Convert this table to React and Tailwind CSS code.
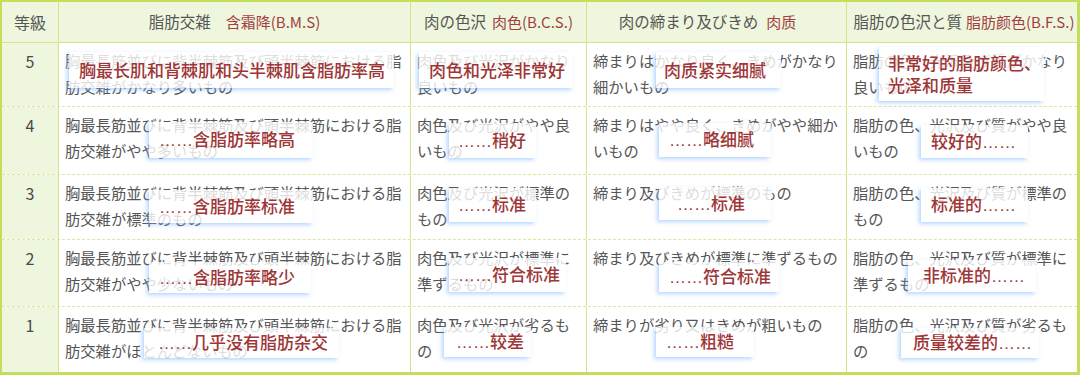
import React from 'react';

const rows = [
  {
    grade: '5',
    h: 'h-[64px]',
    cells: [
      { jp: '胸最長筋並びに背半棘筋及び頭半棘筋における脂肪交雑がかなり多いもの', tag: '胸最长肌和背棘肌和头半棘肌含脂肪率高', pos: 'left-[10px] top-[9px] w-[325px] h-[36px] pl-[10px]' },
      { jp: '肉色及び光沢がかなり良いもの', tag: '肉色和光泽非常好', pos: 'left-[8px] top-[9px] w-[154px] h-[36px] pl-[10px]' },
      { jp: '締まりはかなり良く、きめがかなり細かいもの', tag: '肉质紧实细腻', pos: 'left-[69px] top-[9px] w-[125px] h-[36px] pl-[8px]' },
      { jp: '脂肪の色、光沢及び質がかなり良いもの', tag: '非常好的脂肪颜色、\n光泽和质量', pos: 'left-[32px] top-[4px] w-[165px] h-[54px] pl-[9px]' },
    ],
  },
  {
    grade: '4',
    h: 'h-[68px]',
    cells: [
      { jp: '胸最長筋並びに背半棘筋及び頭半棘筋における脂肪交雑がやや多いもの', tag: '……含脂肪率略高', pos: 'left-[90px] top-[15px] w-[164px] h-[36px] pl-[10px]' },
      { jp: '肉色及び光沢がやや良いもの', tag: '……稍好', pos: 'left-[38px] top-[16px] w-[87px] h-[35px] pl-[9px]' },
      { jp: '締まりはやや良く、きめがやや細かいもの', tag: '……略细腻', pos: 'left-[72px] top-[16px] w-[112px] h-[34px] pl-[10px]' },
      { jp: '脂肪の色、光沢及び質がやや良いもの', tag: '较好的……', pos: 'left-[74px] top-[18px] w-[107px] h-[33px] pl-[10px]' },
    ],
  },
  {
    grade: '3',
    h: 'h-[65px]',
    cells: [
      { jp: '胸最長筋並びに背半棘筋及び頭半棘筋における脂肪交雑が標準のもの', tag: '……含脂肪率标准', pos: 'left-[90px] top-[15px] w-[164px] h-[33px] pl-[10px]' },
      { jp: '肉色及び光沢が標準のもの', tag: '……标准', pos: 'left-[38px] top-[13px] w-[87px] h-[34px] pl-[9px]' },
      { jp: '締まり及びきめが標準のもの', tag: '……标准', pos: 'left-[72px] top-[12px] w-[112px] h-[33px] pl-[18px]' },
      { jp: '脂肪の色、光沢及び質が標準のもの', tag: '标准的……', pos: 'left-[74px] top-[13px] w-[107px] h-[34px] pl-[10px]' },
    ],
  },
  {
    grade: '2',
    h: 'h-[67px]',
    cells: [
      { jp: '胸最長筋並びに背半棘筋及び頭半棘筋における脂肪交雑がやや少ないもの', tag: '……含脂肪率略少', pos: 'left-[90px] top-[22px] w-[162px] h-[31px] pl-[10px]' },
      { jp: '肉色及び光沢が標準に準ずるもの', tag: '……符合标准', pos: 'left-[38px] top-[18px] w-[117px] h-[34px] pl-[9px]' },
      { jp: '締まり及びきめが標準に準ずるもの', tag: '……符合标准', pos: 'left-[72px] top-[22px] w-[120px] h-[30px] pl-[10px]' },
      { jp: '脂肪の色、光沢及び質が標準に準ずるもの', tag: '非标准的……', pos: 'left-[61px] top-[20px] w-[128px] h-[32px] pl-[15px]' },
    ],
  },
  {
    grade: '1',
    h: 'h-[65px]',
    last: true,
    cells: [
      { jp: '胸最長筋並びに背半棘筋及び頭半棘筋における脂肪交雑がほとんどないもの', tag: '……几乎没有脂肪杂交', pos: 'left-[85px] top-[21px] w-[195px] h-[30px] pl-[14px]' },
      { jp: '肉色及び光沢が劣るもの', tag: '……较差', pos: 'left-[33px] top-[20px] w-[87px] h-[30px] pl-[12px]' },
      { jp: '締まりが劣り又はきめが粗いもの', tag: '……粗糙', pos: 'left-[69px] top-[20px] w-[98px] h-[30px] pl-[10px]' },
      { jp: '脂肪の色、光沢及び質が劣るもの', tag: '质量较差的……', pos: 'left-[54px] top-[21px] w-[138px] h-[30px] pl-[12px]' },
    ],
  },
];

const widths = ['w-[352px]', 'w-[176px]', 'w-[260px]', 'w-[231px]'];

const headers = [
  { jp: '脂肪交雑', red: '含霜降(B.M.S)', gap: 'gap-[15px]' },
  { jp: '肉の色沢', red: '肉色(B.C.S.)', gap: 'gap-[6px]' },
  { jp: '肉の締まり及びきめ', red: '肉质', gap: 'gap-[8px] pr-[18px]' },
  { jp: '脂肪の色沢と質', red: '脂肪颜色(B.F.S.)', gap: 'gap-[4px] pl-[4px]' },
];

// dots as latin ellipsis so they sit on the baseline
function TagText({ text }) {
  const parts = text.split('……');
  return parts.map((p, i) => (
    <React.Fragment key={i}>
      {i > 0 && <span className="font-['Liberation_Sans',sans-serif] font-normal">……</span>}
      {p}
    </React.Fragment>
  ));
}

export default function App() {
  return (
    <div className="w-[1080px] h-[376px] bg-white font-['Noto_Sans_CJK_JP',sans-serif] text-[#565656]">
      <div className="w-[1080px] border-t-2 border-l-2 border-r-[3px] border-b-[3px] border-[#c4de5c]">
        {/* header */}
        <div className="flex h-[41px] bg-[#eef6de] border-b border-[#d2e58a]">
          <div className="w-[56px] flex items-center justify-center text-[16px]">等級</div>
          {headers.map((h, i) => (
            <div key={i} className={`${widths[i]} ${h.gap} flex items-center justify-center border-l border-[#d2e58a] text-[15.5px]`}>
              <span>{h.jp}</span>
              <span className="text-[15px] text-[#a3403f] font-['Noto_Sans_CJK_SC',sans-serif]">{h.red}</span>
            </div>
          ))}
        </div>

        {rows.map((row) => (
          <div key={row.grade} className={`flex ${row.h} ${row.last ? '' : 'border-b border-dashed border-[#d8e99e]'}`}>
            <div className="w-[56px] bg-[#eef6de] text-center pt-[5px] text-[16px] leading-[26px] text-[#4a4a4a]">{row.grade}</div>
            {row.cells.map((c, i) => (
              <div key={i} className={`${widths[i]} relative border-l border-[#d2e58a] pl-[6px] pr-[4px] pt-[4px] text-[15.3px] leading-[26px]`}>
                {c.jp}
                <div className={`absolute ${c.pos} flex items-center whitespace-pre bg-white/80 shadow-[-2px_2px_4px_rgba(110,175,255,0.5)] text-[17px] leading-[22px] font-medium text-[#9e3637] font-['Noto_Sans_CJK_SC',sans-serif]`}>
                  <span><TagText text={c.tag} /></span>
                </div>
              </div>
            ))}
          </div>
        ))}
      </div>
    </div>
  );
}
